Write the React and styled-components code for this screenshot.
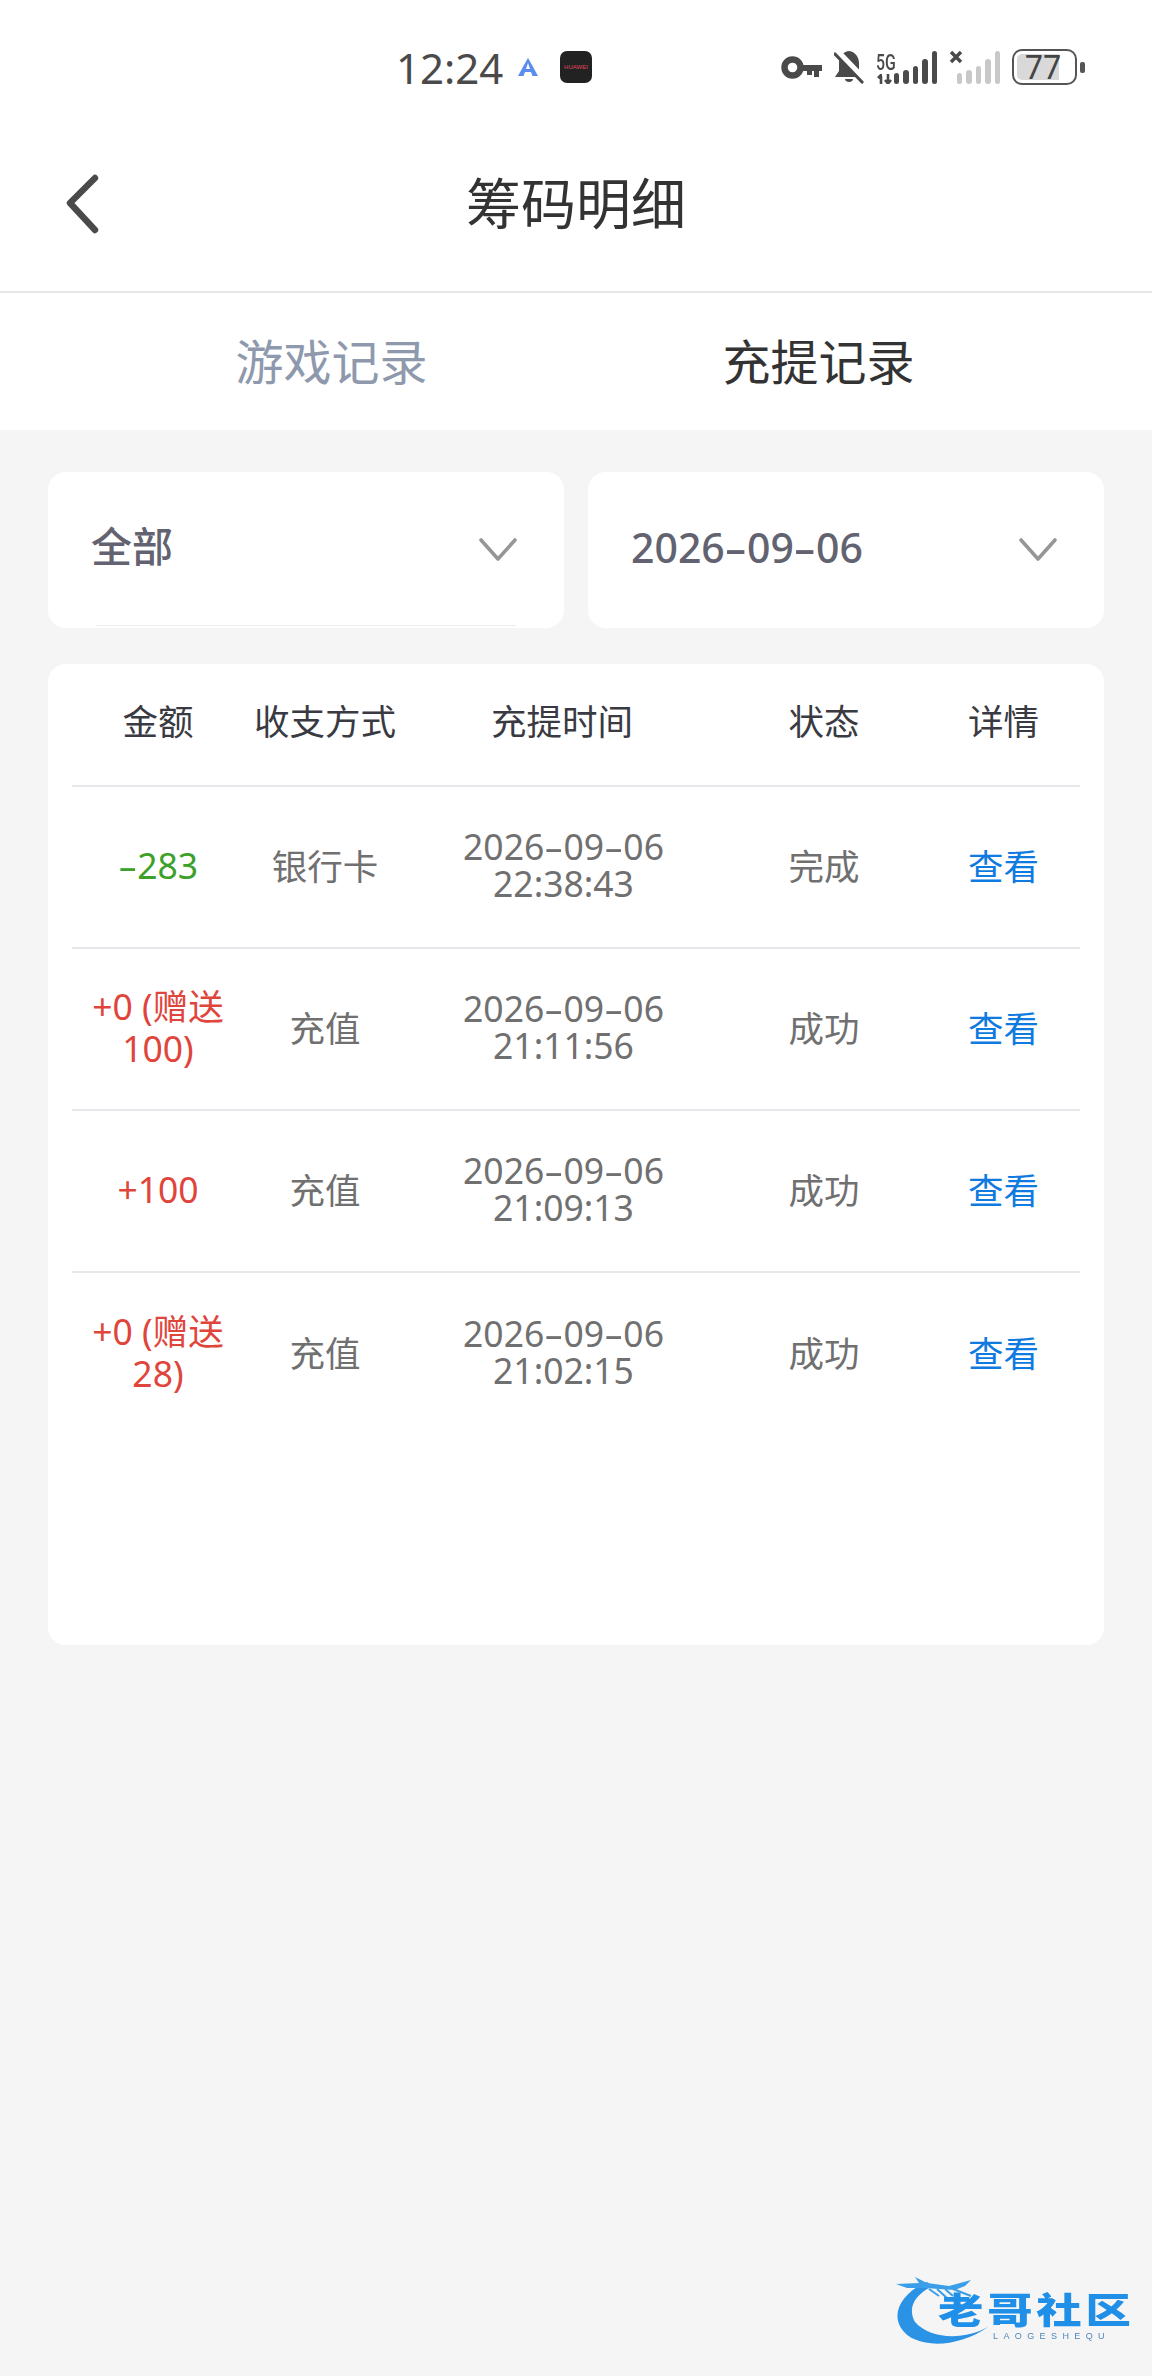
import React from "react";
import styled, { createGlobalStyle } from "styled-components";

const FONT = `"Noto Sans", "Noto Sans CJK SC", sans-serif`;

const records = [
  { amount: "-283", kind: "out", method: "银行卡", date: "2026-09-06", time: "22:38:43", status: "完成" },
  { amount: "+0 (赠送100)", kind: "in", method: "充值", date: "2026-09-06", time: "21:11:56", status: "成功" },
  { amount: "+100", kind: "in", method: "充值", date: "2026-09-06", time: "21:09:13", status: "成功" },
  { amount: "+0 (赠送28)", kind: "in", method: "充值", date: "2026-09-06", time: "21:02:15", status: "成功" },
];

const signalBars = [11, 14, 18, 25, 33];

// the hyphens in the picture are much wider than the font's own
const Dashed = ({ text }) =>
  text.split("-").map((part, i) => (
    <React.Fragment key={i}>
      {i > 0 && <Dash>-</Dash>}
      {part}
    </React.Fragment>
  ));

const Arrow = () => (
  <svg width="40" height="26" viewBox="0 0 40 26">
    <path d="M3 3 L20 22 L37 3" fill="none" stroke="#969696" strokeWidth="3.6" strokeLinecap="round" strokeLinejoin="round" />
  </svg>
);

const App = () => {
  return (
    <Page>
      <GlobalStyle />
      <StatusBar>
        <Clock>12:24</Clock>
        <svg width="20" height="18" viewBox="0 0 20 18">
          <path d="M10 0 L14 7 L20 18 L14.5 18 L13 14 L7 14 L5.5 18 L0 18 L6 7 Z" fill="#5b8def" />
          <path d="M10 5 L12 11 L8 11 Z" fill="#fff" />
        </svg>
        <AppIcon>
          <AppLabel>HUAWEI</AppLabel>
        </AppIcon>
        <StatusIcons>
          <svg width="41" height="23" viewBox="0 0 41 23">
            <circle cx="11.5" cy="11.5" r="8" fill="none" stroke="#4a4a4a" strokeWidth="6.4" />
            <path d="M18 9 H41 V15 H38 V21 H33 V15 H31 V19 H26 V15 H18 Z" fill="#4a4a4a" />
          </svg>
          <svg width="30" height="34" viewBox="0 0 30 34">
            <path d="M15 1 C22 2 25 8 25 13 V21 L29 27 H1 L5 21 V13 C5 8 8 2 15 1 Z" fill="#4a4a4a" />
            <path d="M11 29 H19 C19 33 11 33 11 29 Z" fill="#4a4a4a" />
            <path d="M3 1 L30 29" stroke="#fff" strokeWidth="6" />
            <path d="M1 4 L28 32" stroke="#4a4a4a" strokeWidth="3.2" strokeLinecap="round" />
          </svg>
          <Signal>
            <NetLabel>
              <b>5G</b>
              <svg width="18" height="10" viewBox="0 0 18 10">
                <path d="M5 10 V2 M2 4 L5 1 L6 1 M12 0 V8 M9 6 L12 9.5 L15 6" fill="none" stroke="#4a4a4a" strokeWidth="2.6" />
              </svg>
            </NetLabel>
            <Bars>
              {signalBars.map((h) => (
                <Bar key={h} h={h} />
              ))}
            </Bars>
          </Signal>
          <Signal>
            <NoSim width="14" height="14" viewBox="0 0 14 14">
              <path d="M2 2 L12 12 M12 2 L2 12" stroke="#4a4a4a" strokeWidth="3.4" />
            </NoSim>
            <Bars indent>
              {signalBars.map((h) => (
                <Bar key={h} h={h} off />
              ))}
            </Bars>
          </Signal>
          <Battery>
            <BatteryBody>
              <BatteryFill style={{ width: "77%" }} />
              <BatteryText>77</BatteryText>
            </BatteryBody>
            <BatteryTip />
          </Battery>
        </StatusIcons>
      </StatusBar>

      <Header>
        <BackButton>
          <svg width="36" height="60" viewBox="0 0 36 60">
            <path d="M31 4 L6 29 L31 56" fill="none" stroke="#4a4a4a" strokeWidth="6.4" strokeLinecap="round" strokeLinejoin="round" />
          </svg>
        </BackButton>
        <Title>筹码明细</Title>
      </Header>

      <Tabs>
        <Tab>游戏记录</Tab>
        <Tab active>充提记录</Tab>
      </Tabs>

      <Content>
        <Filters>
          <Select>
            <SelectValue raised>全部</SelectValue>
            <Arrow />
            <SelectEdge />
          </Select>
          <Select>
            <SelectValue>
              <Dashed text="2026-09-06" />
            </SelectValue>
            <Arrow />
          </Select>
        </Filters>

        <TableCard>
          <HeadRow>
            <HeadCell>金额</HeadCell>
            <HeadCell>收支方式</HeadCell>
            <HeadCell>充提时间</HeadCell>
            <HeadCell>状态</HeadCell>
            <HeadCell>详情</HeadCell>
          </HeadRow>
          {records.map((r) => (
            <Row key={r.time}>
              <Amount kind={r.kind}>
                <Dashed text={r.amount} />
              </Amount>
              <Cell>{r.method}</Cell>
              <Cell>
                <DateTime>
                  <Dashed text={r.date} />
                  <br />
                  {r.time}
                </DateTime>
              </Cell>
              <Cell>{r.status}</Cell>
              <DetailLink>查看</DetailLink>
            </Row>
          ))}
        </TableCard>
      </Content>

      <Watermark>
        <WatermarkLogo width="100" height="76" viewBox="0 0 100 76">
          <path d="M32 10 C8 20 -4 40 6 56 C18 76 60 78 93 55 C70 68 36 68 20 50 C12 36 20 22 38 14 Z" fill="#2b93e6" />
          <path d="M1 12 L24 11 L20 5 L32 11 L54 14 L76 8 L70 14 L60 18 L44 17 L30 16 L12 16 Z" fill="#3a9ee8" />
          <path d="M34 17 L44 24 M42 17 L52 26 M50 17 L58 24 M58 17 L76 24" stroke="#3a9ee8" strokeWidth="2" />
        </WatermarkLogo>
        <WatermarkName>老哥社区</WatermarkName>
        <WatermarkSub>LAOGESHEQU</WatermarkSub>
      </Watermark>
    </Page>
  );
};

export default App;

const GlobalStyle = createGlobalStyle`
  html, body {
    margin: 0;
    padding: 0;
    background: #f5f5f5;
  }
  * {
    box-sizing: border-box;
  }
`;

const Page = styled.div`
  position: relative;
  width: 1152px;
  height: 2376px;
  overflow: hidden;
  background: #f5f5f5;
  font-family: ${FONT};
`;

const StatusBar = styled.div`
  height: 132px;
  background: #fff;
  display: flex;
  align-items: center;
  padding: 2px 67px 0 396px;
  color: #4a4a4a;
`;

const Clock = styled.div`
  font-size: 42px;
  width: 122px;
`;

const AppIcon = styled.div`
  width: 32px;
  height: 32px;
  margin-left: 22px;
  border-radius: 7px;
  background: #222;
  display: flex;
  align-items: center;
  justify-content: center;
  overflow: hidden;
`;

const AppLabel = styled.span`
  font-family: "Liberation Sans", sans-serif;
  font-size: 6px;
  color: #e0475a;
`;

const StatusIcons = styled.div`
  margin-left: auto;
  display: flex;
  align-items: center;
  gap: 12px;
`;

const Signal = styled.div`
  position: relative;
  display: flex;
  align-items: flex-end;
  height: 34px;
`;

const NetLabel = styled.div`
  width: 18px;
  display: flex;
  flex-direction: column;
  font-family: "Roboto", sans-serif;
  b {
    font-size: 22px;
    line-height: 22px;
    font-weight: 500;
    white-space: nowrap;
    transform: scaleX(0.72);
    transform-origin: left center;
  }
`;

const NoSim = styled.svg`
  position: absolute;
  left: 0;
  top: 0;
`;

const Bars = styled.div`
  display: flex;
  align-items: flex-end;
  gap: 4px;
  margin-left: ${(props) => (props.indent ? "8px" : "0")};
`;

const Bar = styled.div`
  width: 5.4px;
  height: ${(props) => props.h}px;
  border-radius: 3px;
  background: ${(props) => (props.off ? "#c8c8c8" : "#4a4a4a")};
`;

const Battery = styled.div`
  display: flex;
  align-items: center;
  gap: 3px;
`;

const BatteryBody = styled.div`
  position: relative;
  width: 65px;
  height: 36px;
  padding: 3px;
  border: 2.5px solid #555;
  border-radius: 10px;
  overflow: hidden;
`;

const BatteryFill = styled.div`
  height: 100%;
  background: #d9d9d9;
  border-radius: 5px 0 0 5px;
`;

const BatteryText = styled.span`
  position: absolute;
  inset: 0;
  display: flex;
  align-items: center;
  justify-content: center;
  padding-right: 3px;
  font-size: 32px;
  line-height: 30px;
  color: #444;
`;

const BatteryTip = styled.div`
  width: 5px;
  height: 11px;
  border-radius: 2px;
  background: #555;
`;

const Header = styled.div`
  position: relative;
  height: 161px;
  padding-bottom: 24px;
  background: #fff;
  border-bottom: 2px solid #e8e8e8;
  display: flex;
  align-items: center;
  justify-content: center;
`;

const BackButton = styled.div`
  position: absolute;
  left: 64px;
  top: 42px;
  display: flex;
`;

const Title = styled.h1`
  margin: 0;
  font-size: 55px;
  font-weight: 400;
  color: #333;
`;

const Tabs = styled.div`
  height: 137px;
  padding: 0 90px 6px 88px;
  background: #fff;
  display: grid;
  grid-template-columns: 1fr 1fr;
  align-items: center;
  justify-items: center;
`;

const Tab = styled.div`
  font-size: 48px;
  color: ${(props) => (props.active ? "#333" : "#8e99ad")};
`;

const Content = styled.div`
  padding: 42px 48px 0;
  display: flex;
  flex-direction: column;
  gap: 36px;
`;

const Filters = styled.div`
  display: grid;
  grid-template-columns: 516px 516px;
  gap: 24px;
`;

const Select = styled.div`
  position: relative;
  height: 156px;
  background: #fff;
  border-radius: 18px;
  padding: 0 46px 0 43px;
  display: flex;
  align-items: center;
  justify-content: space-between;
`;

const SelectValue = styled.span`
  font-size: 41px;
  font-weight: 500;
  color: #626270;
  position: relative;
  top: ${(props) => (props.raised ? "-6px" : "-3px")};
`;

const Dash = styled.span`
  display: inline-block;
  margin: 0 0.11em;
  transform: scaleX(1.7);
`;

const SelectEdge = styled.div`
  position: absolute;
  left: 48px;
  right: 48px;
  bottom: 2px;
  height: 1px;
  background: #eee;
`;

const TableCard = styled.div`
  height: 981px;
  background: #fff;
  border-radius: 18px;
  padding: 0 24px;
`;

const columns = "172px 162px 312px 212px 147px";

const HeadRow = styled.div`
  display: grid;
  grid-template-columns: ${columns};
  align-items: center;
  height: 123px;
  padding-bottom: 10px;
  border-bottom: 2px solid #e8e8ec;
`;

const HeadCell = styled.div`
  text-align: center;
  font-size: 35.5px;
  color: #3a3a42;
`;

const Row = styled.div`
  display: grid;
  grid-template-columns: ${columns};
  align-items: center;
  height: 162px;
  padding-bottom: 5px;
  border-bottom: 2px solid #e8e8ec;
  &:last-child {
    border-bottom: none;
  }
`;

const Cell = styled.div`
  text-align: center;
  font-size: 35.5px;
  color: #707070;
`;

const Amount = styled(Cell)`
  line-height: 42px;
  padding: 0 5px;
  color: ${(props) => (props.kind === "out" ? "#3da02a" : "#e0453c")};
`;

const DateTime = styled.div`
  line-height: 37px;
  padding-left: 3px;
`;

const DetailLink = styled(Cell)`
  color: #0f7ae0;
`;

const Watermark = styled.div`
  position: absolute;
  left: 895px;
  top: 2272px;
  width: 245px;
  height: 76px;
  padding: 22px 0 0 43px;
  filter: blur(0.5px);
`;

const WatermarkLogo = styled.svg`
  position: absolute;
  left: 0;
  top: 0;
`;

const WatermarkName = styled.div`
  font-size: 36px;
  line-height: 34px;
  font-weight: 900;
  white-space: nowrap;
  letter-spacing: 3px;
  color: #1f8fe8;
  transform: scaleX(1.26);
  transform-origin: left center;
`;

const WatermarkSub = styled.div`
  margin: 4px 0 0 55px;
  font-family: "Liberation Sans", sans-serif;
  font-size: 9px;
  line-height: 9px;
  letter-spacing: 5.4px;
  white-space: nowrap;
  color: #4f87b8;
`;
